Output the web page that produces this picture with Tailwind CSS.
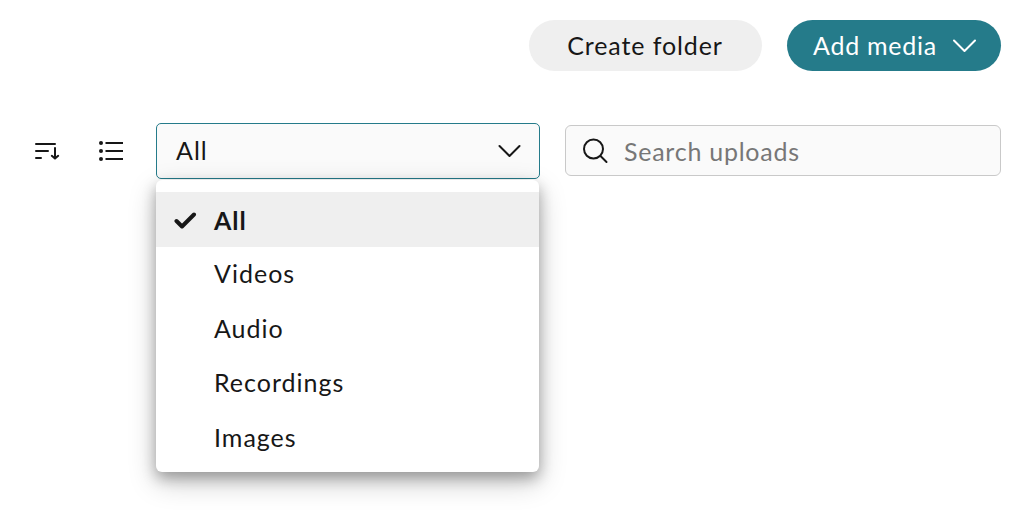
<!DOCTYPE html>
<html lang="en">
<head>
    <meta charset="UTF-8">
    <meta name="viewport" content="width=device-width, initial-scale=1.0">
    <title>Uploads</title>
    <script src="https://cdn.jsdelivr.net/npm/@tailwindcss/browser@4"></script>
</head>
<body class="h-[511px] overflow-hidden bg-white font-['Lato',sans-serif] text-[25px] leading-8 tracking-[1px] text-[#171717]">
    <div class="pt-5 pr-6">
        <!-- Page actions -->
        <div class="flex justify-end gap-[25px]">
            <button class="h-[51px] w-[233px] rounded-full bg-[#efefef] pr-px pb-px tracking-[0.9px]">Create folder</button>
            <button class="flex h-[51px] w-[214px] items-center rounded-full bg-[#257b8a] pl-[26px] tracking-[0.75px] text-white">
                <span class="w-[139px] pb-px text-left">Add media</span>
                <svg class="h-6 w-6" viewBox="0 0 24 24" fill="none" stroke="currentColor" stroke-width="2" stroke-linecap="round" stroke-linejoin="round">
                    <path d="M2 6.500l10.500 10.500L23 6.500"/>
                </svg>
            </button>
        </div>

        <!-- Filters -->
        <div class="mt-[52px] flex items-start">
            <div class="mt-4 ml-[35px] flex w-[121px] gap-10">
                <svg class="h-6 w-6 overflow-visible" viewBox="0 0 24 24" fill="none" stroke="currentColor" stroke-width="2" stroke-linecap="round" stroke-linejoin="round">
                    <path d="M1 5h19M1 12h12M1 19h5M20 9v10M16.800 16.800L20 19.600l3.200-2.800"/>
                </svg>
                <svg class="h-6 w-6 overflow-visible" viewBox="0 0 24 24" fill="currentColor" stroke="currentColor" stroke-width="2">
                    <path d="M6.500 4H24M6.500 12H24M6.500 20H24"/>
                    <g stroke="none">
                        <circle cx="2" cy="4" r="2"/>
                        <circle cx="2" cy="12" r="2"/>
                        <circle cx="2" cy="20" r="2"/>
                    </g>
                </svg>
            </div>

            <div class="relative w-[384px]">
                <button class="flex h-14 w-full items-center justify-between rounded-[5px] border border-[#257b8a] bg-[#fafafa] pr-[17px] pl-[19px] tracking-[1px]">
                    <span class="pb-0.5">All</span>
                    <svg class="h-6 w-6" viewBox="0 0 24 24" fill="none" stroke="currentColor" stroke-width="2" stroke-linecap="round" stroke-linejoin="round">
                        <path d="M1.500 7l10 10 10-10"/>
                    </svg>
                </button>
                <ul class="absolute top-[57px] left-0 h-[292px] w-[383px] rounded-md bg-white pt-3 shadow-[0_10px_28px_rgba(0,0,0,0.22),0_6px_14px_rgba(0,0,0,0.28)]">
                    <li class="flex h-[55px] items-center bg-[#efefef] pl-[18px] font-bold">
                        <svg class="mr-4 h-6 w-6" viewBox="0 0 24 24" fill="none" stroke="currentColor" stroke-width="4" stroke-linecap="round" stroke-linejoin="round">
                            <path d="M2.500 13L8 18.500 20 6.500"/>
                        </svg>
                        All
                    </li>
                    <li class="flex h-[54.5px] items-center pb-0.5 pl-[58px]">Videos</li>
                    <li class="flex h-[54.5px] items-center pb-0.5 pl-[58px]">Audio</li>
                    <li class="flex h-[54.5px] items-center pb-0.5 pl-[58px]">Recordings</li>
                    <li class="flex h-[54.5px] items-center pb-0.5 pl-[58px]">Images</li>
                </ul>
            </div>

            <label class="mt-0.5 ml-[25px] flex h-[51px] w-[436px] items-center rounded-md border border-[#c9c9c9] bg-[#fafafa] pl-[17px]">
                <svg class="mr-[15px] h-[26px] w-[26px] shrink-0" viewBox="0 0 26 26" fill="none" stroke="currentColor" stroke-width="2" stroke-linecap="round">
                    <circle cx="10.500" cy="11" r="9.500"/>
                    <path d="M17.500 18l6 6"/>
                </svg>
                <input type="text" placeholder="Search uploads" class="min-w-0 flex-1 bg-transparent tracking-[0.75px] outline-none placeholder:text-[#777]">
            </label>
        </div>
    </div>
</body>
</html>
